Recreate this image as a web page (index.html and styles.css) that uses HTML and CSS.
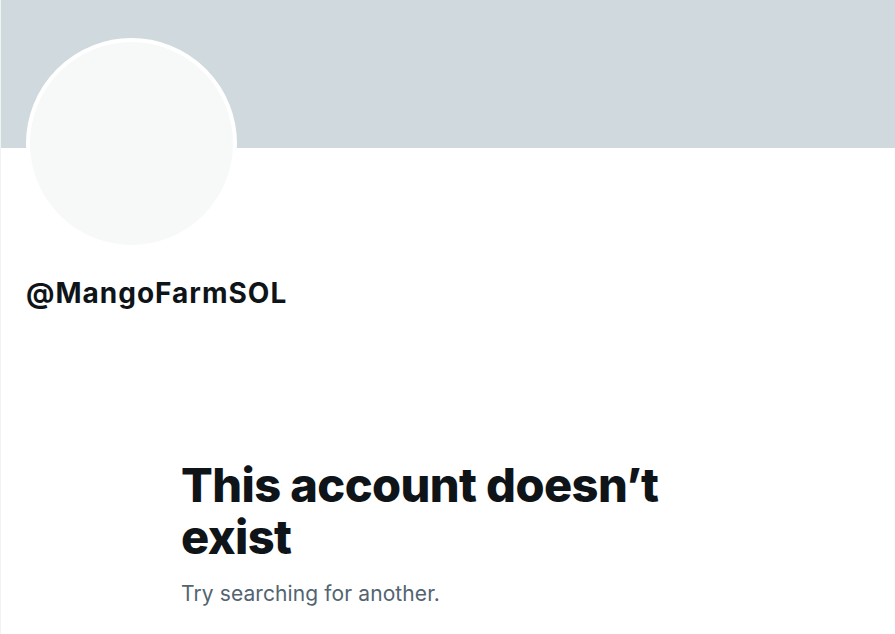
FILE: index.html
```html
<!DOCTYPE html>
<html lang="en">
<head>
<meta charset="utf-8">
<title>Profile</title>
<link rel="stylesheet" href="styles.css">
</head>
<body>
<main class="page">
  <div class="banner"></div>
  <div class="profile">
    <div class="avatar"></div>
    <div class="handle">@MangoFarmSOL</div>
  </div>
  <section class="empty">
    <h1 class="empty-title">This account doesn’t exist</h1>
    <p class="empty-sub">Try searching for another.</p>
  </section>
</main>
</body>
</html>
```
FILE: styles.css
```css
html, body {
  margin: 0;
  padding: 0;
  background: #ffffff;
}
body {
  font-family: Inter, "Noto Sans", "Liberation Sans", sans-serif;
  color: #0f1419;
}
.page {
  width: 895px;
  height: 634px;
  box-sizing: border-box;
  border-left: 1px solid #eff3f4;
  overflow: hidden;
}
.banner {
  height: 148px;
  background: #cfd9de;
}
.profile {
  padding-left: 25px;
}
.avatar {
  width: 203px;
  height: 203px;
  margin-top: -110px;
  border: 4px solid #ffffff;
  border-radius: 50%;
  background: #f7f9f9;
}
.handle {
  margin-top: 28px;
  font-size: 28px;
  line-height: 32px;
  font-weight: 700;
  letter-spacing: 1px;
}
.empty {
  padding-left: 180px;
  margin-top: 150px;
}
.empty-title {
  margin: 0;
  width: 500px;
  font-size: 47px;
  line-height: 52px;
  font-weight: 800;
  letter-spacing: -0.6px;
}
.empty-sub {
  margin: 17px 0 0;
  font-size: 21px;
  line-height: 28px;
  letter-spacing: 0.1px;
  color: #536471;
}
```
